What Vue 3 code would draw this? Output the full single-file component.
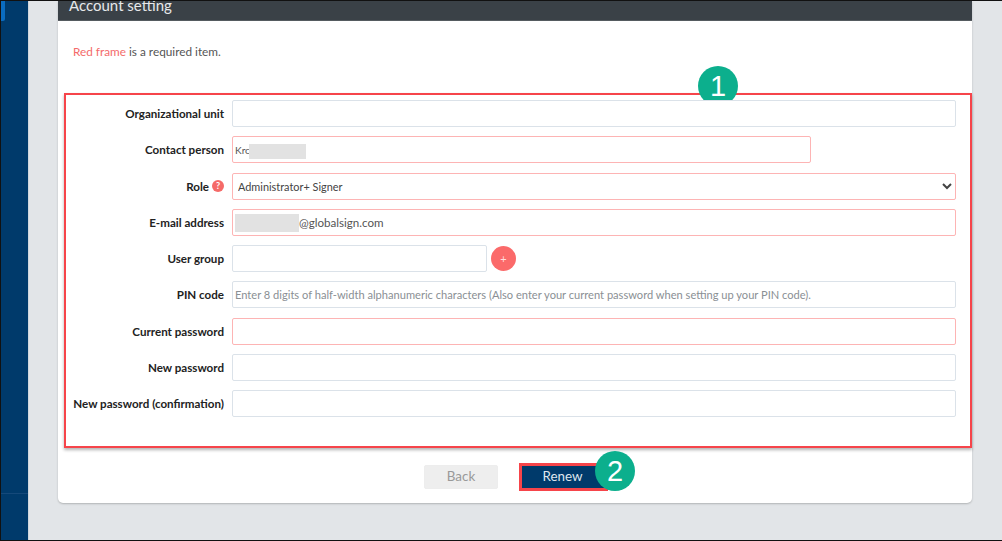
<script setup>
const rows = [
  { label: 'Organizational unit', kind: 'input' },
  { label: 'Contact person', kind: 'input', required: true, value: 'Krc', short: true, mask: 'mask-contact', small: true },
  { label: 'Role', kind: 'select', required: true, help: true },
  { label: 'E-mail address', kind: 'input', required: true, value: '@globalsign.com', mask: 'mask-mail', indent: true },
  { label: 'User group', kind: 'group' },
  { label: 'PIN code', kind: 'input', placeholder: 'Enter 8 digits of half-width alphanumeric characters (Also enter your current password when setting up your PIN code).' },
  { label: 'Current password', kind: 'input', required: true },
  { label: 'New password', kind: 'input' },
  { label: 'New password (confirmation)', kind: 'input' },
]
</script>

<template>
  <div class="screen">
    <aside class="sidebar">
      <div class="side-tab"></div>
      <div class="side-line"></div>
    </aside>
    <main class="main">
      <section class="card">
        <header class="card-head">Account setting</header>
        <p class="note"><span class="note-red">Red frame</span> is a required item.</p>
        <div class="frame">
          <span class="badge badge-one">1</span>
          <div v-for="row in rows" :key="row.label" class="row">
            <label class="label">
              {{ row.label }}
              <span v-if="row.help" class="help">?</span>
            </label>
            <div class="control">
              <select v-if="row.kind === 'select'" class="field field-red select">
                <option>Administrator+ Signer</option>
              </select>
              <template v-else-if="row.kind === 'group'">
                <input class="field group-field" />
                <span class="plus">+</span>
              </template>
              <div v-else class="field-wrap" :class="{ short: row.short }">
                <input
                  class="field"
                  :class="{ 'field-red': row.required, indent: row.indent, small: row.small }"
                  :value="row.value"
                  :placeholder="row.placeholder"
                />
                <span v-if="row.mask" class="mask" :class="row.mask"></span>
              </div>
            </div>
          </div>
        </div>
        <div class="actions">
          <button class="btn btn-back">Back</button>
          <div class="renew-wrap">
            <button class="btn btn-renew">Renew</button>
            <span class="badge badge-two">2</span>
          </div>
        </div>
      </section>
    </main>
  </div>
</template>

<style>
html, body { margin: 0; background: #e2e5e8; overflow: hidden; }
</style>

<style scoped>
.screen {
  display: flex;
  width: 1002px;
  height: 541px;
  box-sizing: border-box;
  border-top: 1px solid #111;
  border-bottom: 1px solid #111;
  border-left: 1px solid #111;
  overflow: hidden;
  background: #e2e5e8;
  font-family: "Lato", "Liberation Sans", sans-serif;
  color: #222;
}
.sidebar {
  position: relative;
  width: 27px;
  flex: none;
  background: #003a6b;
  border-right: 1px solid #cfd6dc;
}
.side-tab {
  width: 4px;
  height: 20px;
  background: #0a6cc0;
  border-radius: 0 0 2px 0;
}
.side-line {
  margin-top: 472px;
  height: 1px;
  background: #15497a;
}
.main { flex: 1; padding-left: 29px; min-width: 0; }
.card {
  width: 914px;
  height: 502px;
  background: #fff;
  border-radius: 0 0 5px 5px;
  box-shadow: 0 1px 2px rgba(0, 0, 0, 0.22);
  display: flex;
  flex-direction: column;
}
.card-head {
  height: 19px;
  flex: none;
  background: #3a4147;
  border-bottom: 1px solid #555b60;
  color: #e6e8ea;
  font-size: 15px;
  line-height: 8px;
  padding-left: 11px;
  overflow: hidden;
}
.note {
  margin: 0;
  padding: 24px 0 0 15px;
  height: 48px;
  box-sizing: content-box;
  font-size: 11.8px;
  line-height: 14px;
  color: #555;
  flex: none;
}
.note-red { color: #f46a6a; }
.frame {
  position: relative;
  margin-left: 6px;
  width: 908px;
  height: 355px;
  box-sizing: border-box;
  flex: none;
  border: 2px solid #f6444a;
  box-shadow: 0 2px 3px rgba(0, 0, 0, 0.3);
  padding-top: 5px;
  display: flex;
  flex-direction: column;
  gap: 8.25px;
}
.row { display: flex; align-items: flex-start; height: 28px; flex: none; }
.label {
  width: 158px;
  height: 27px;
  flex: none;
  text-align: right;
  font-size: 11.6px;
  font-weight: 700;
  color: #222;
  white-space: nowrap;
  display: flex;
  justify-content: flex-end;
  align-items: center;
  gap: 3px;
}
.help {
  width: 12px;
  height: 12px;
  border-radius: 50%;
  background: #f56a68;
  color: #fff;
  font-size: 9px;
  line-height: 12px;
  text-align: center;
}
.control {
  margin-left: 8px;
  width: 724px;
  flex: none;
  display: flex;
  align-items: center;
}
.field-wrap { position: relative; width: 100%; }
.field-wrap.short { width: 579px; }
.field {
  display: block;
  width: 100%;
  height: 27px;
  box-sizing: border-box;
  border: 1px solid #dbe2e9;
  border-radius: 2px;
  background: #fff;
  padding: 0 2px;
  font-family: inherit;
  font-size: 11.1px;
  color: #555;
  outline: none;
}
.field::placeholder { color: #8a8f94; opacity: 1; }
.field-red { border-color: #fdb4b4; }
.small { font-size: 10px; }
.indent { padding-left: 66px; font-size: 11.6px; }
.select { color: #444; font-size: 10.9px; padding: 0 1px; }
.group-field { width: 255px; flex: none; }
.plus {
  margin-left: 4px;
  width: 25px;
  height: 25px;
  border-radius: 50%;
  background: #fb6a6a;
  color: #fdd;
  font-size: 11px;
  line-height: 25px;
  text-align: center;
}
.mask { position: absolute; background: #e2e2e2; filter: blur(0.6px); }
.mask-contact { left: 17px; top: 8px; width: 57px; height: 15px; }
.mask-mail { left: 3px; top: 5px; width: 64px; height: 18px; }
.actions {
  display: flex;
  justify-content: flex-start;
  align-items: center;
  padding-left: 366px;
  margin-top: 15px;
  gap: 21px;
}
.btn {
  font-family: inherit;
  font-size: 13.4px;
  padding: 0 0 2px;
  box-sizing: border-box;
}
.btn-back {
  width: 74px;
  height: 24px;
  background: #eeeeee;
  border: 1px solid #ededed;
  border-radius: 2px;
  color: #999;
}
.renew-wrap { position: relative; }
.btn-renew {
  display: block;
  width: 89px;
  height: 28px;
  padding-right: 2px;
  background: #003a6b;
  border: 3px solid #f6444a;
  color: #dfe6ee;
}
.badge {
  position: absolute;
  width: 40px;
  height: 40px;
  border-radius: 50%;
  background: #0caf8d;
  color: #fff;
  font-family: "Liberation Sans", sans-serif;
  font-size: 29px;
  line-height: 40px;
  text-align: center;
}
.badge-one { left: 632px; top: -29px; }
.badge-two { left: 76px; top: -12px; }
</style>
